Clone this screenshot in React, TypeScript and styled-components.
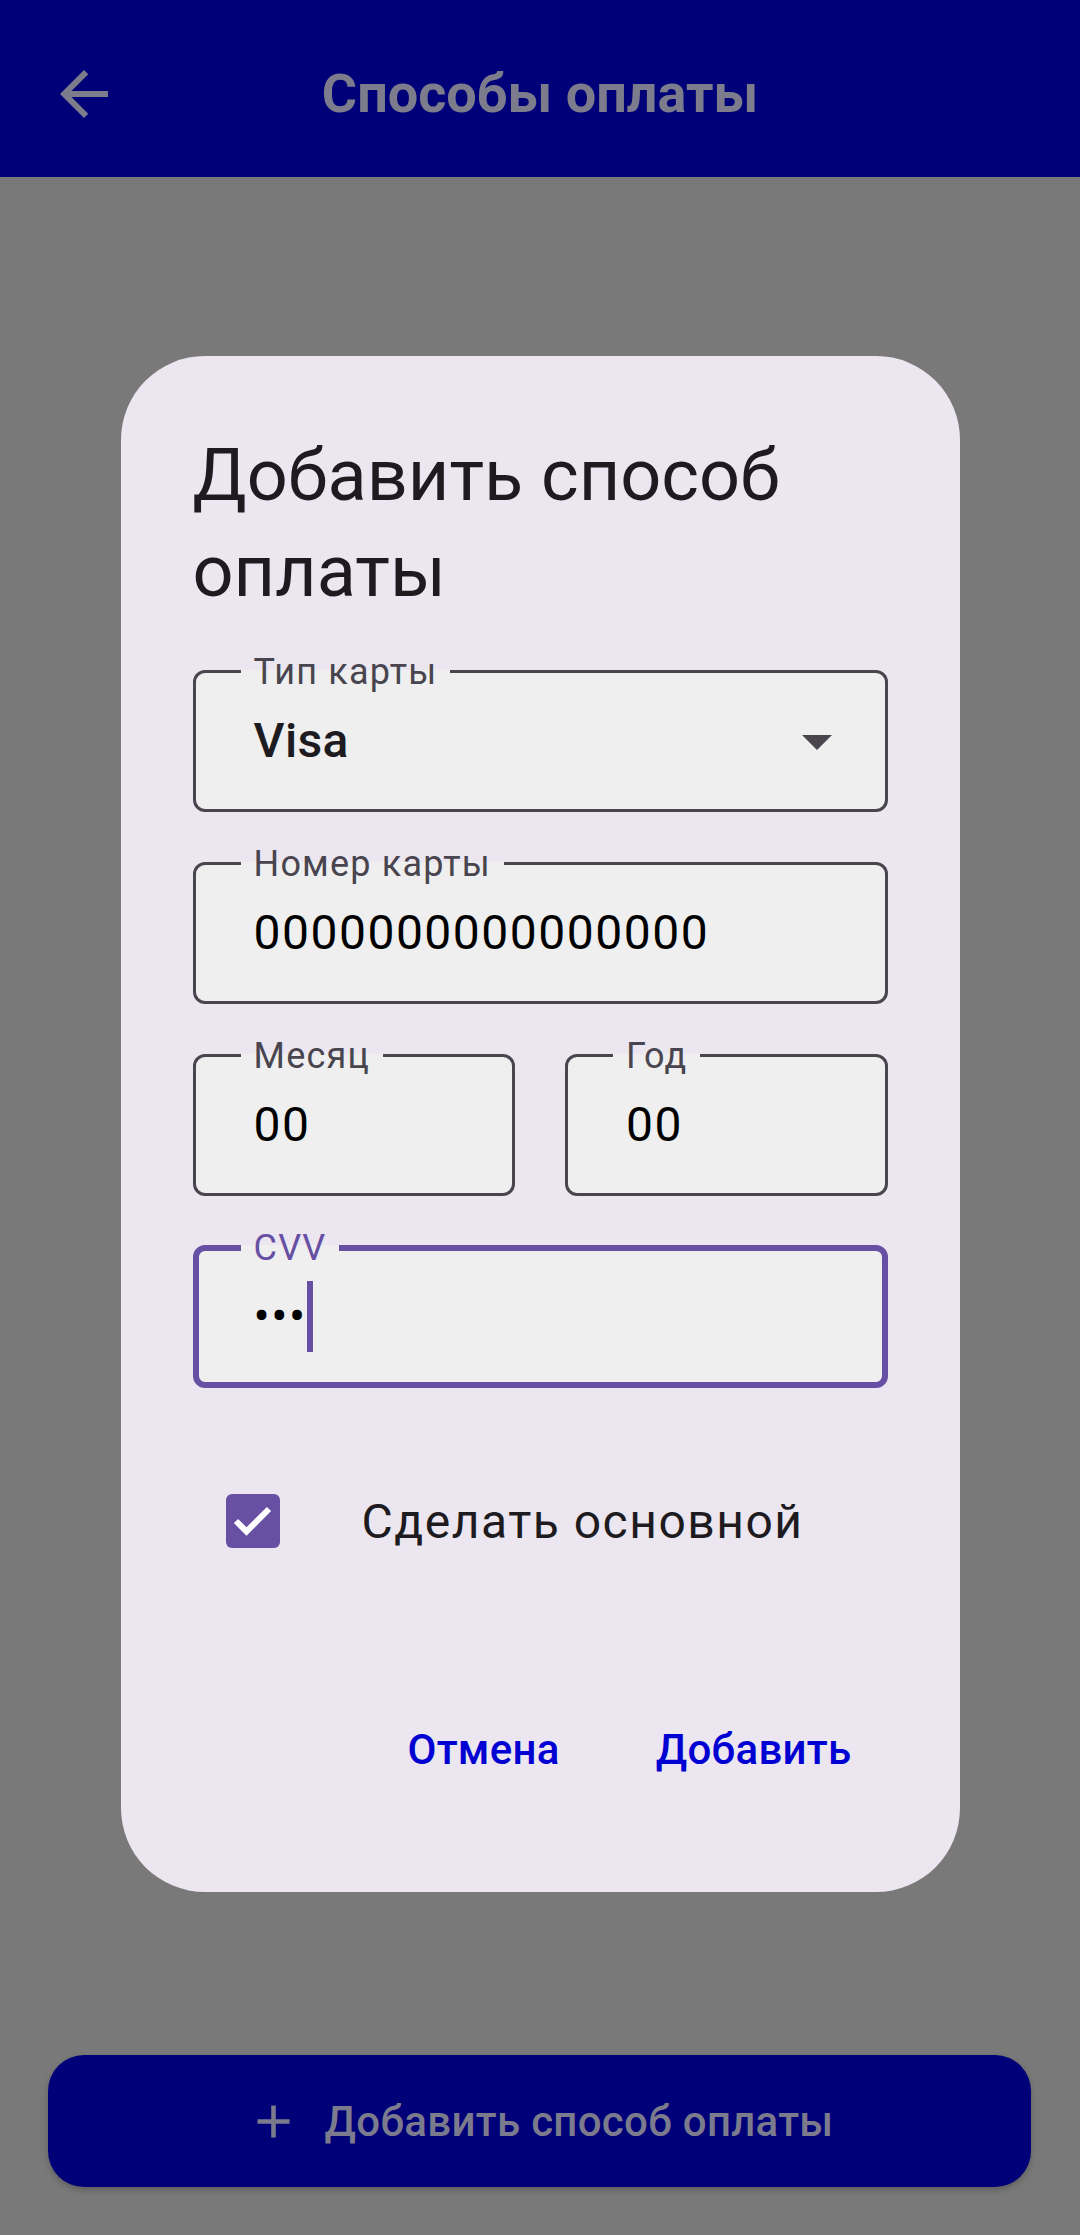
import React from "react";
import styled, { createGlobalStyle } from "styled-components";

const GlobalStyle = createGlobalStyle`
  html, body { margin: 0; padding: 0; }
  body { background: #797979; font-family: Roboto, "Noto Sans", sans-serif; }
  * { box-sizing: border-box; }
`;

const Page = styled.div`
  position: relative;
  width: 1080px;
  height: 2235px;
  display: flex;
  flex-direction: column;
  background: #797979;
  overflow: hidden;
`;

const TopBar = styled.header`
  height: 177px;
  flex-shrink: 0;
  background: #000078;
  display: grid;
  grid-template-columns: 1fr auto 1fr;
  align-items: center;
  padding: 10px 48px 0 48px;
`;

const IconButton = styled.div`
  width: 72px;
  height: 72px;
  display: flex;
  align-items: center;
  justify-content: center;
  color: #7c7c8c;
`;

const TopTitle = styled.h1`
  margin: 0;
  font-family: Roboto, sans-serif;
  font-size: 54px;
  font-weight: 700;
  color: #7c7c8c;
  letter-spacing: 0;
`;

const Spacer = styled.div`
  flex: 1;
`;

const BottomBar = styled.div`
  padding: 0 49px 48px 48px;
`;

const AddButton = styled.button`
  width: 100%;
  height: 132px;
  border: none;
  border-radius: 36px;
  background: #000078;
  box-shadow: 0 3px 6px rgba(0, 0, 0, 0.22);
  display: flex;
  align-items: center;
  justify-content: center;
  gap: 24px;
  color: #7b7b8d;
  font-family: Roboto, sans-serif;
  font-size: 42px;
  font-weight: 500;
  letter-spacing: 0.3px;
  padding: 0;
`;

const Overlay = styled.div`
  position: absolute;
  inset: 0;
  display: flex;
  justify-content: center;
  align-items: flex-start;
  padding-top: 356px;
`;

const Dialog = styled.div`
  width: 839px;
  background: #ece6f0;
  border-radius: 84px;
  padding: 72px 72px 83px 72px;
  display: flex;
  flex-direction: column;
`;

const DialogTitle = styled.h2`
  margin: 0;
  font-family: Roboto, sans-serif;
  font-size: 72px;
  line-height: 96px;
  font-weight: 400;
  color: #1d1b20;
`;

const Form = styled.div`
  display: flex;
  flex-direction: column;
  gap: 33.5px;
  margin-top: 33.5px;
`;

const FieldRow = styled.div`
  display: flex;
  gap: 50px;
`;

const Field = styled.fieldset<{ $focused?: boolean }>`
  flex: 1;
  margin: 0;
  padding: 0;
  min-width: 0;
  border: ${(p) => (p.$focused ? "6px solid #6750a4" : "3px solid #49454f")};
  border-radius: 12px;
  background: #efefef;
`;

const Legend = styled.legend<{ $focused?: boolean }>`
  margin-left: ${(p) => (p.$focused ? "42px" : "45px")};
  padding: 0 13px;
  font-family: Roboto, sans-serif;
  font-size: 36px;
  line-height: 36px;
  height: 36px;
  letter-spacing: 1.2px;
  color: ${(p) => (p.$focused ? "#6750a4" : "#49454f")};
`;

const ValueRow = styled.div<{ $focused?: boolean }>`
  display: flex;
  align-items: center;
  height: 48px;
  box-sizing: content-box;
  padding: 27px 32px ${(p) => (p.$focused ? "41.5px" : "44.5px")}
    ${(p) => (p.$focused ? "55px" : "58px")};
`;

const Value = styled.span<{ $strong?: boolean }>`
  flex: 1;
  font-family: Roboto, sans-serif;
  font-size: 48px;
  line-height: 48px;
  letter-spacing: ${(p) => (p.$strong ? "0.4px" : "1.5px")};
  font-weight: ${(p) => (p.$strong ? 500 : 400)};
  color: ${(p) => (p.$strong ? "#1d1b20" : "#000000")};
  display: flex;
  align-items: center;
  white-space: nowrap;
`;

const Caret = styled.span`
  display: inline-block;
  width: 6px;
  height: 71px;
  margin-left: 0;
  background: #6750a4;
`;

const TrailingIcon = styled.svg`
  flex-shrink: 0;
  width: 72px;
  height: 72px;
`;

const CheckRow = styled.label`
  margin-top: 61px;
  height: 144px;
  display: flex;
  align-items: center;
  gap: 82px;
  padding-left: 33px;
`;

const CheckBox = styled.span`
  width: 54px;
  height: 54px;
  border-radius: 6px;
  background: #6750a4;
  display: flex;
  align-items: center;
  justify-content: center;
  flex-shrink: 0;
`;

const CheckLabel = styled.span`
  font-family: Roboto, sans-serif;
  font-size: 48px;
  letter-spacing: 1.5px;
  color: #1d1b20;
`;

const Actions = styled.div`
  margin-top: 96px;
  height: 120px;
  display: flex;
  justify-content: flex-end;
  align-items: center;
  gap: 24px;
`;

const TextButton = styled.button`
  height: 120px;
  padding: 0 36px;
  border: none;
  background: transparent;
  font-family: Roboto, sans-serif;
  font-size: 42px;
  font-weight: 500;
  letter-spacing: 0.3px;
  color: #0000d2;
`;

export default function App() {
  return (
    <>
      <GlobalStyle />
      <Page>
        <TopBar>
          <IconButton>
            <svg width="72" height="72" viewBox="0 0 24 24" fill="currentColor">
              <path d="M20 11H7.83l5.59-5.59L12 4l-8 8 8 8 1.41-1.41L7.83 13H20v-2z" />
            </svg>
          </IconButton>
          <TopTitle>Способы оплаты</TopTitle>
          <div />
        </TopBar>
        <Spacer />
        <BottomBar>
          <AddButton>
            <svg width="55" height="55" viewBox="0 0 24 24" fill="currentColor">
              <path d="M19 13h-6v6h-2v-6H5v-2h6V5h2v6h6v2z" />
            </svg>
            Добавить способ оплаты
          </AddButton>
        </BottomBar>

        <Overlay>
          <Dialog>
            <DialogTitle>
              Добавить способ
              <br />
              оплаты
            </DialogTitle>
            <Form>
              <Field>
                <Legend>Тип карты</Legend>
                <ValueRow>
                  <Value $strong>Visa</Value>
                  <TrailingIcon viewBox="0 0 24 24" fill="#49454f">
                    <path d="M7 10l5 5 5-5z" />
                  </TrailingIcon>
                </ValueRow>
              </Field>
              <Field>
                <Legend>Номер карты</Legend>
                <ValueRow>
                  <Value>0000000000000000</Value>
                </ValueRow>
              </Field>
              <FieldRow>
                <Field>
                  <Legend>Месяц</Legend>
                  <ValueRow>
                    <Value>00</Value>
                  </ValueRow>
                </Field>
                <Field>
                  <Legend>Год</Legend>
                  <ValueRow>
                    <Value>00</Value>
                  </ValueRow>
                </Field>
              </FieldRow>
              <Field $focused>
                <Legend $focused>CVV</Legend>
                <ValueRow $focused>
                  <Value>
                    •••
                    <Caret />
                  </Value>
                </ValueRow>
              </Field>
            </Form>
            <CheckRow>
              <CheckBox>
                <svg width="54" height="54" viewBox="0 0 54 54">
                  <polyline
                    points="10,27 20.5,37.5 43,15"
                    fill="none"
                    stroke="#ffffff"
                    strokeWidth="6"
                  />
                </svg>
              </CheckBox>
              <CheckLabel>Сделать основной</CheckLabel>
            </CheckRow>
            <Actions>
              <TextButton>Отмена</TextButton>
              <TextButton>Добавить</TextButton>
            </Actions>
          </Dialog>
        </Overlay>
      </Page>
    </>
  );
}
